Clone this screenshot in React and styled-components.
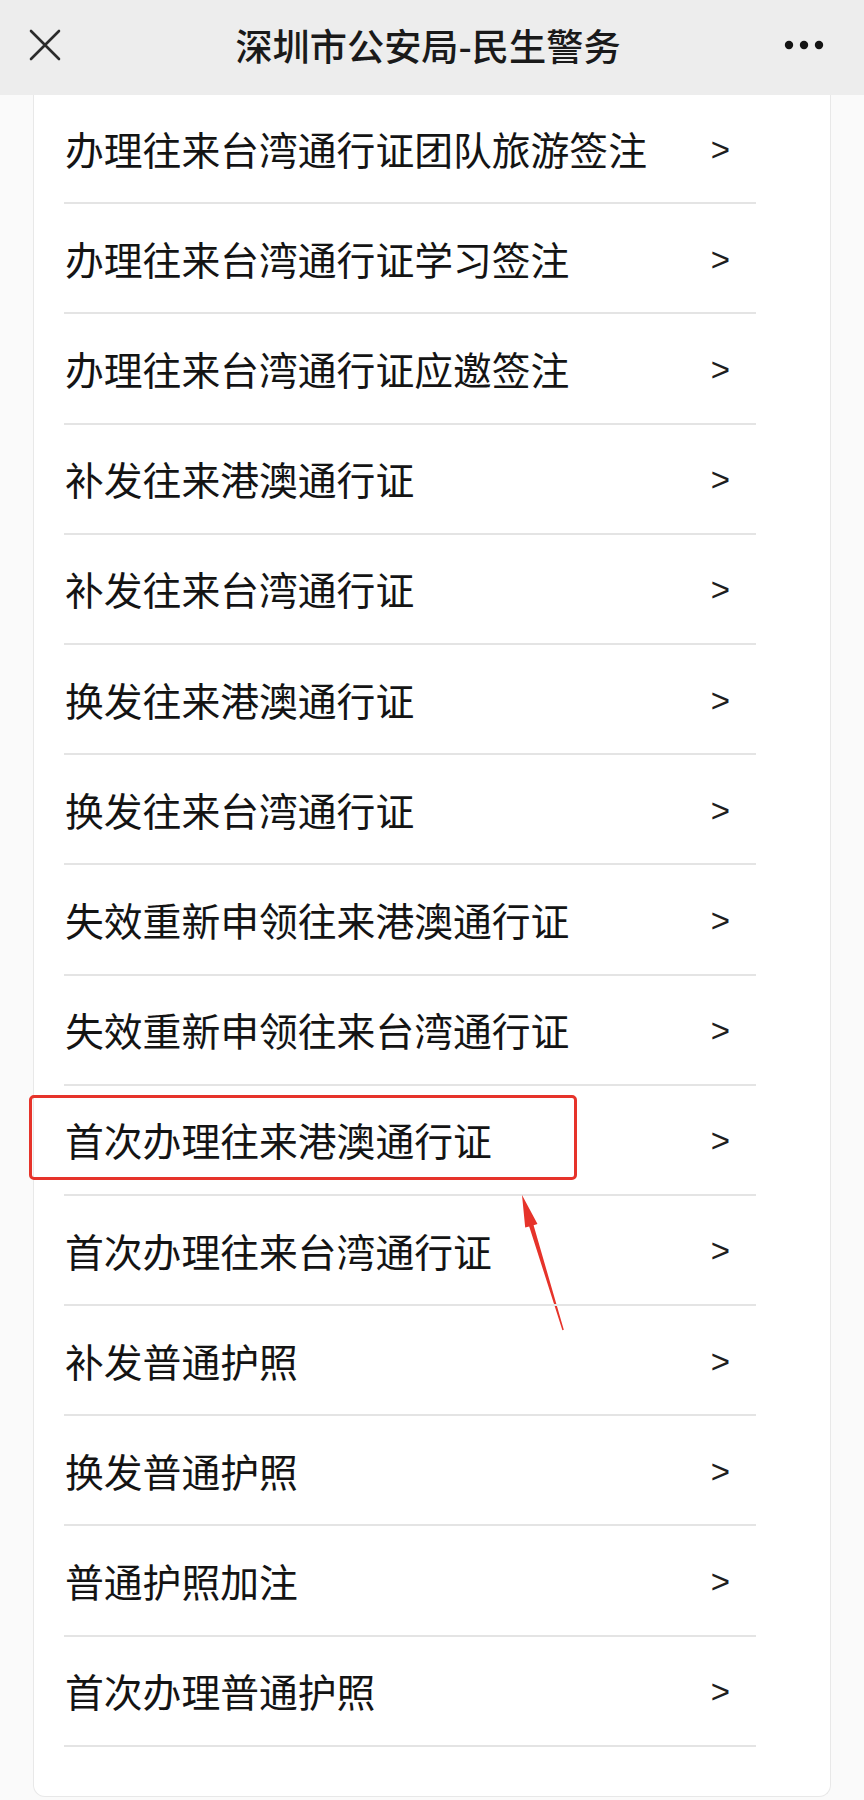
import React from 'react';
import styled, { createGlobalStyle } from 'styled-components';

const GlobalStyle = createGlobalStyle`
  html, body {
    margin: 0;
    padding: 0;
    background: #fafafa;
  }
  body {
    font-family: "Noto Sans CJK SC", "Noto Sans", sans-serif;
  }
`;

const Page = styled.div`
  width: 864px;
  height: 1800px;
  overflow: hidden;
`;

const TopBar = styled.header`
  position: relative;
  z-index: 2;
  height: 95px;
  background: #ededed;
  display: grid;
  grid-template-columns: 95px 1fr 95px;
  align-items: center;
`;

const Title = styled.h1`
  margin: 0;
  text-align: center;
  font-family: "Noto Sans CJK SC", sans-serif;
  font-size: 37.2px;
  font-weight: 500;
  color: #1a1a1a;
  line-height: 1;
  padding: 0 8px 4px 0;
`;

const IconButton = styled.div`
  display: flex;
  align-items: center;
  justify-content: ${(p) => (p.$end ? 'flex-end' : 'flex-start')};
  padding: ${(p) => (p.$end ? '0 40px 6px 0' : '0 0 6px 29px')};
  height: 100%;
  box-sizing: border-box;
`;

const Card = styled.main`
  margin: 0 33px;
  height: 1703px;
  background: #ffffff;
  border: 1px solid #e8e8e8;
  border-top: none;
  border-radius: 0 0 12px 12px;
  box-sizing: border-box;
`;

const List = styled.ul`
  list-style: none;
  margin: -1px 74px 0 30px;
  padding: 0;
`;

const Row = styled.li`
  position: relative;
  height: 110.2px;
  box-sizing: border-box;
  border-bottom: 2px solid #e4e4e4;
  display: flex;
  align-items: center;
  justify-content: space-between;
`;

const Label = styled.span`
  font-family: "Noto Sans CJK SC", sans-serif;
  font-size: 38.8px;
  color: #141414;
  line-height: 1;
  margin-left: 1px;
`;

const Chevron = styled.span`
  font-family: "Liberation Sans", Arial, sans-serif;
  font-size: 33px;
  color: #1e1e1e;
  margin-right: 26px;
  line-height: 1;
  padding-top: 2px;
`;

const Highlight = styled.div`
  position: absolute;
  left: -35px;
  top: 9px;
  width: 548px;
  height: 85px;
  border: 3px solid #e6332a;
  border-radius: 5px;
  box-sizing: border-box;
  pointer-events: none;
`;

const Pointer = styled.svg`
  position: absolute;
  left: 0;
  top: 0;
  width: 600px;
  height: 260px;
  overflow: visible;
  pointer-events: none;
`;

const items = [
  '办理往来台湾通行证团队旅游签注',
  '办理往来台湾通行证学习签注',
  '办理往来台湾通行证应邀签注',
  '补发往来港澳通行证',
  '补发往来台湾通行证',
  '换发往来港澳通行证',
  '换发往来台湾通行证',
  '失效重新申领往来港澳通行证',
  '失效重新申领往来台湾通行证',
  '首次办理往来港澳通行证',
  '首次办理往来台湾通行证',
  '补发普通护照',
  '换发普通护照',
  '普通护照加注',
  '首次办理普通护照',
];

const MARKED = 9;

function CloseIcon() {
  return (
    <svg width="32" height="32" viewBox="0 0 32 32">
      <path d="M2 2L30 30M30 2L2 30" stroke="#2b2b2b" strokeWidth="2.6" strokeLinecap="round" />
    </svg>
  );
}

function MoreIcon() {
  return (
    <svg width="40" height="10" viewBox="0 0 40 10">
      <circle cx="5" cy="5" r="4.2" fill="#141414" />
      <circle cx="20" cy="5" r="4.2" fill="#141414" />
      <circle cx="35" cy="5" r="4.2" fill="#141414" />
    </svg>
  );
}

function Arrow() {
  return (
    <Pointer viewBox="0 0 600 260">
      <polygon
        points="458,109 473.5,138 469.6,139.2 499.8,243.8 498.4,244.2 465.2,140.4 461.2,141.6"
        fill="#e6332a"
      />
    </Pointer>
  );
}

export default function App() {
  return (
    <Page>
      <GlobalStyle />
      <TopBar>
        <IconButton>
          <CloseIcon />
        </IconButton>
        <Title>深圳市公安局-民生警务</Title>
        <IconButton $end>
          <MoreIcon />
        </IconButton>
      </TopBar>

      <Card>
        <List>
          {items.map((text, i) => (
            <Row key={text}>
              <Label>{text}</Label>
              <Chevron>&gt;</Chevron>
              {i === MARKED && (
                <>
                  <Highlight />
                  <Arrow />
                </>
              )}
            </Row>
          ))}
        </List>
      </Card>
    </Page>
  );
}
